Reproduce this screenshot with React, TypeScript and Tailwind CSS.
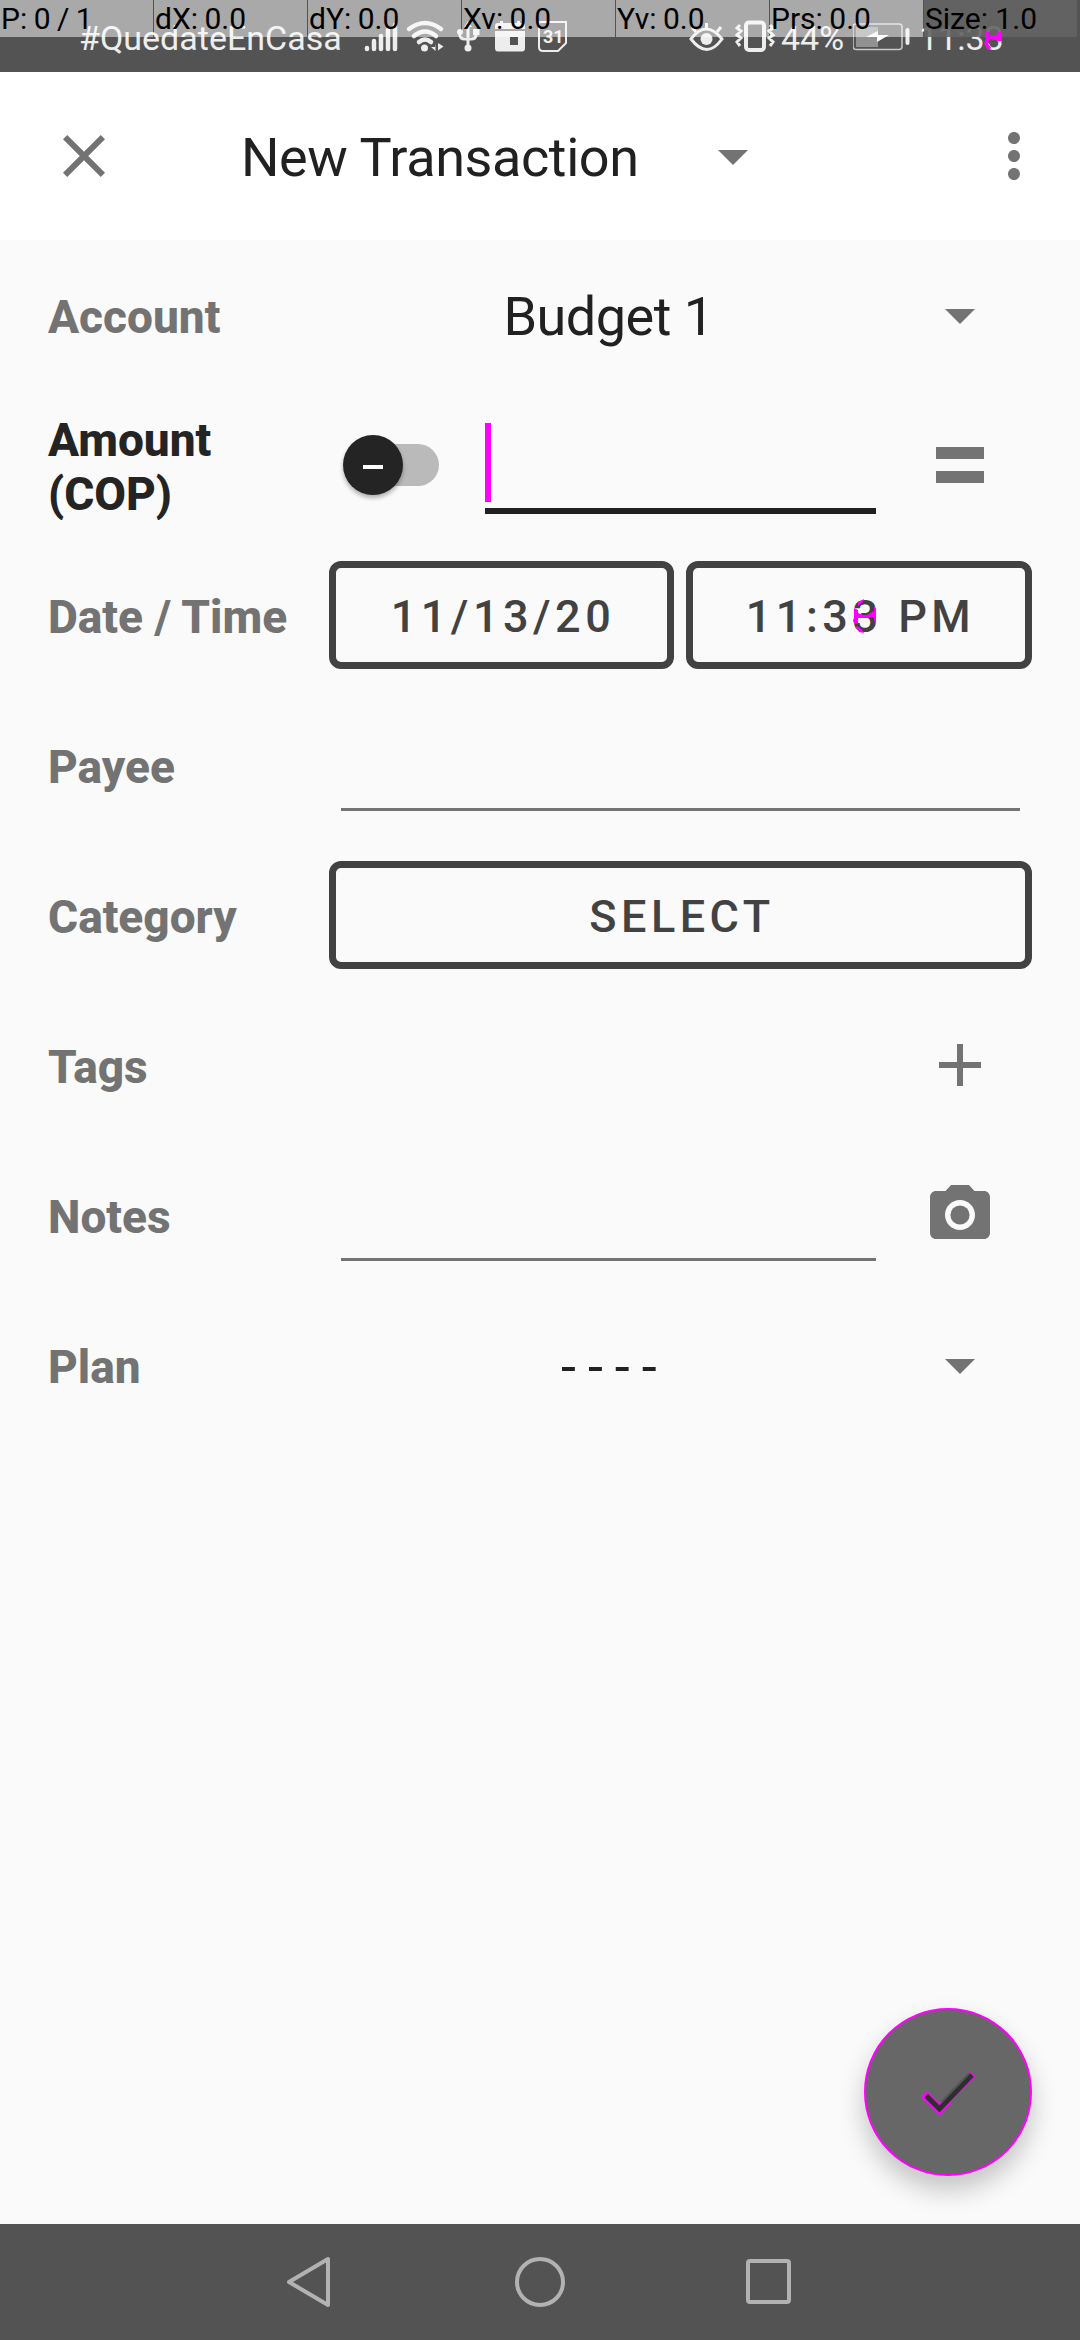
import React from "react";

const GREY = "#737373";

function Caret() {
  return (
    <svg width="72" height="72" viewBox="0 0 24 24" className="shrink-0" fill={GREY}>
      <path d="M7 10l5 5 5-5z" />
    </svg>
  );
}

function Row({ label, active, children }: { label: string; active?: boolean; children?: React.ReactNode }) {
  return (
    <div className="flex h-[150px] items-center pl-12">
      <div
        className={
          active
            ? "w-[281px] shrink-0 whitespace-pre-line pt-[3px] text-[46px] font-extrabold leading-[54px] text-[#242424]"
            : "w-[281px] shrink-0 pt-[3px] text-[46px] font-extrabold leading-[54px] text-[#737373]"
        }
      >
        {label}
      </div>
      {children}
    </div>
  );
}

function OutlineButton({ className, children }: { className: string; children: React.ReactNode }) {
  return (
    <button
      className={
        "flex h-[108px] items-center justify-center rounded-[12px] border-[7px] border-[#424242] pl-[3px] pt-[3px] text-[45px] font-medium leading-none tracking-[4.5px] text-[#424242] " +
        className
      }
    >
      {children}
    </button>
  );
}

const pointerCells = ["P: 0 / 1", "dX: 0.0", "dY: 0.0", "Xv: 0.0", "Yv: 0.0", "Prs: 0.0"];

function StatusBar() {
  return (
    <div className="relative h-[72px] shrink-0 bg-[#535353] text-[34px] leading-none text-[#ededed]">
      <div className="flex h-[72px] items-center pl-[79px]">
        <span className="w-[262px] pt-[3px]">#QuedateEnCasa</span>
        <svg width="230" height="72" viewBox="341 0 230 72" className="shrink-0" fill="#ededed">
          <path d="M367 48v1M374 41v8M381 36v13M388 30v19M395 25v24" stroke="#ededed" strokeWidth="4.500" strokeLinecap="round" />
          <g fill="none" stroke="#ededed" strokeWidth="4.500" strokeLinecap="round">
            <path d="M409 29q16-12 32 0M414 36q11-9 22 0M419 42q6-5 12 0" />
          </g>
          <circle cx="424.500" cy="48" r="3.500" />
          <path d="M435.500 43v8l-4.500-4h4zM438 43l5.500 3.500-5.500 4z" />
          <g fill="none" stroke="#ededed" strokeWidth="3">
            <path d="M468 25v24M460 32v3q0 4 5 4h6q5 0 5-4v-3" />
          </g>
          <circle cx="468" cy="48" r="3.500" />
          <circle cx="460" cy="32" r="3" />
          <rect x="473" y="29" width="6.500" height="6" />
          <path d="M464 27l4-6 4 6z" />
          <path fillRule="evenodd" d="M495 31h30v17q0 3.500-3 3.500h-24q-3 0-3-3.500zM510 37v8h8v-8zM495 29v-3q0-3 3-3h2v-2h3v2h14v-2h3v2h2q3 0 3 3v3z" />
          <path d="M540 22h26v21l-8 8h-15q-4 0-4-4v-22q0-3 1-3z" fill="none" stroke="#ededed" strokeWidth="2" />
          <text x="543" y="42.500" fontSize="18" fontWeight="700">31</text>
        </svg>
        <svg width="210" height="72" viewBox="571 0 210 72" className="shrink-0" fill="none" stroke="#ededed">
          <path d="M691 39q15-20 31 0q-15 21-31 0z" strokeWidth="3" />
          <circle cx="706.500" cy="39" r="6" fill="#ededed" stroke="none" />
          <path d="M706.500 28v-5M696 32l-4-5M717 32l4-5" strokeWidth="3" />
          <rect x="746" y="22.500" width="18" height="27.500" rx="3" strokeWidth="4" />
          <path d="M740 25l-3 3 4 3-4 4 4 3-4 4 3 4M770 25l3 3-4 3 4 4-4 3 4 4-3 4" strokeWidth="3" />
        </svg>
        <span className="w-[72px] pt-[3px]">44%</span>
        <svg width="66" height="72" viewBox="853 0 66 72" className="shrink-0">
          <rect x="856" y="27" width="22" height="20" fill="#919191" />
          <rect x="853" y="24" width="49" height="25.500" rx="3" fill="none" stroke="#c8c8c8" strokeWidth="1.500" />
          <path d="M866 37l12-6v4h11l-12 7v-5z" fill="#fff" />
          <path d="M907.500 30v13" stroke="#ededed" strokeWidth="4" strokeLinecap="round" />
        </svg>
        <span className="pt-[3px]">11:3</span>
        <span className="relative pt-[3px]">3</span>
      </div>
      <div className="absolute inset-x-0 top-0 flex h-[37px] gap-px text-[30px] leading-[37px] text-black">
        {pointerCells.map((t) => (
          <div key={t} className="w-[153px] whitespace-nowrap bg-white/50 pl-px [word-spacing:-1px]">{t}</div>
        ))}
        <div className="w-[153px] whitespace-nowrap bg-[#646464]/90 pl-px">Size: 1.0</div>
      </div>
      <svg width="20" height="20" viewBox="0 0 20 20" className="absolute left-[984px] top-[31px]" fill="none" stroke="#ff00ff">
        <path d="M3 1v5l1 2-2 4 2 4 2 2M6 6l4 1 7-4M11 7l5 2M16 1v9" strokeWidth="3.500" />
      </svg>
    </div>
  );
}

export default function App() {
  return (
    <div className="relative flex h-[2340px] w-[1080px] flex-col overflow-hidden bg-[#fafafa] font-['Roboto',sans-serif]">
      <StatusBar />
      <header className="flex h-[168px] shrink-0 items-center bg-white pl-12">
        <svg width="72" height="72" viewBox="0 0 24 24" fill={GREY}>
          <path d="M19 6.410L17.590 5 12 10.590 6.410 5 5 6.410 10.590 12 5 17.590 6.410 19 12 13.410 17.590 19 19 17.590 13.410 12z" />
        </svg>
        <h1 className="ml-[121px] w-[456px] whitespace-nowrap pt-1 text-[54px] leading-[72px] tracking-[-0.4px] text-[#212121]">
          New Transaction
        </h1>
        <Caret />
        <svg width="72" height="72" viewBox="0 0 24 24" className="ml-[209px]" fill={GREY}>
          <path d="M12 8c1.100 0 2-.9 2-2s-.9-2-2-2-2 .9-2 2 .9 2 2 2zm0 2c-1.100 0-2 .9-2 2s.9 2 2 2 2-.9 2-2-.9-2-2-2zm0 6c-1.100 0-2 .9-2 2s.9 2 2 2 2-.9 2-2-.9-2-2-2z" />
        </svg>
      </header>
      <main className="flex flex-col">
        <Row label="Account">
          <span className="w-[556px] pl-[3px] pt-[3px] text-center text-[54px] tracking-[-0.5px] text-[#212121]">Budget 1</span>
          <span className="ml-[39px]"><Caret /></span>
        </Row>
        <Row label={"Amount\n(COP)"} active>
          <div className="relative ml-[14px] flex h-[60px] w-[142px] items-center">
            <div className="ml-1 h-[42px] w-[92px] rounded-full bg-[#bababa]" />
            <div className="absolute left-0 top-0 flex size-[60px] items-center justify-center rounded-full bg-[#242424] shadow-[0_3px_4px_rgba(0,0,0,0.3)]">
              <div className="mt-[3px] h-1 w-5 bg-white" />
            </div>
          </div>
          <div className="mt-[7px] h-[91px] w-[391px] border-b-[6px] border-[#212121]">
            <div className="h-[79px] w-1.5 bg-[#ff00ff]" />
          </div>
          <svg width="72" height="72" viewBox="0 0 24 24" className="ml-12" fill={GREY}>
            <path d="M4 6h16v4H4zM4 14h16v4H4z" />
          </svg>
        </Row>
        <Row label="Date / Time">
          <OutlineButton className="w-[345px]">11/13/20</OutlineButton>
          <OutlineButton className="ml-3 w-[346px]">
            <span className="whitespace-pre">
              11:3<span className="relative">3<svg width="26" height="36" viewBox="0 0 26 36" className="absolute left-0 top-[9px]" fill="#ff00ff">
                <path d="M2 9l4 2v14l-4-1-1-2 1-4v-3zM6 14l5 2h4l7-4 1 6-8 1H6zM22 8l2 1v16l-2-4zM6 3l6-3-1 3-5 4zM3 27l4 1 4 4 1 2-5-1z" />
              </svg></span> PM
            </span>
          </OutlineButton>
        </Row>
        <Row label="Payee">
          <div className="ml-3 mt-[16px] h-[75px] w-[679px] border-b-[3px] border-[#737373]" />
        </Row>
        <Row label="Category">
          <OutlineButton className="w-[703px]">SELECT</OutlineButton>
        </Row>
        <Row label="Tags">
          <svg width="72" height="72" viewBox="0 0 24 24" className="ml-[595px]" fill={GREY}>
            <path d="M19 13h-6v6h-2v-6H5v-2h6V5h2v6h6v2z" />
          </svg>
        </Row>
        <Row label="Notes">
          <div className="ml-3 mt-[16px] h-[75px] w-[535px] border-b-[3px] border-[#737373]" />
          <svg width="72" height="72" viewBox="0 0 24 24" className="ml-12" fill={GREY}>
            <circle cx="12" cy="12" r="3.200" />
            <path d="M9 2L7.170 4H4c-1.100 0-2 .9-2 2v12c0 1.100.9 2 2 2h16c1.100 0 2-.9 2-2V6c0-1.100-.9-2-2-2h-3.170L15 2H9zm3 15c-2.760 0-5-2.240-5-5s2.240-5 5-5 5 2.240 5 5-2.240 5-5 5z" />
          </svg>
        </Row>
        <Row label="Plan">
          <span className="w-[556px] pl-[3px] pt-[3px] text-center text-[54px] tracking-[-0.7px] text-[#212121]">- - - -</span>
          <span className="ml-[39px]"><Caret /></span>
        </Row>
      </main>
      <button className="absolute bottom-[164px] right-12 flex size-[168px] items-center justify-center rounded-full border-2 border-[#ff00ff] bg-[#676767] shadow-[0_14px_26px_rgba(0,0,0,0.22)]">
        <svg width="72" height="72" viewBox="0 0 72 72" fill="none">
          <path d="M12 38L27.500 53.500L37 43.500" stroke="#ff00ff" strokeWidth="8.500" />
          <path d="M32 50.500L61.500 20" stroke="#ff00ff" strokeWidth="3" />
          <path d="M57 17l5.500 4.500" stroke="#ff00ff" strokeWidth="3" />
          <path d="M14 39.500L27.500 53L60 19" stroke="#2e2e2e" strokeWidth="5" />
          <path d="M29.500 46L57 17.500" stroke="#555555" strokeWidth="2" />
        </svg>
      </button>
      <nav className="mt-auto flex h-[116px] shrink-0 items-center bg-[#535353] pl-[286px]">
        <svg width="508" height="60" viewBox="0 0 508 60" fill="none" stroke="#b2b2b2" strokeWidth="4" strokeLinejoin="round">
          <path d="M3 30L42 7v46z" />
          <circle cx="254" cy="30" r="23" />
          <rect x="462" y="9" width="41" height="41" rx="2" />
        </svg>
      </nav>
    </div>
  );
}
